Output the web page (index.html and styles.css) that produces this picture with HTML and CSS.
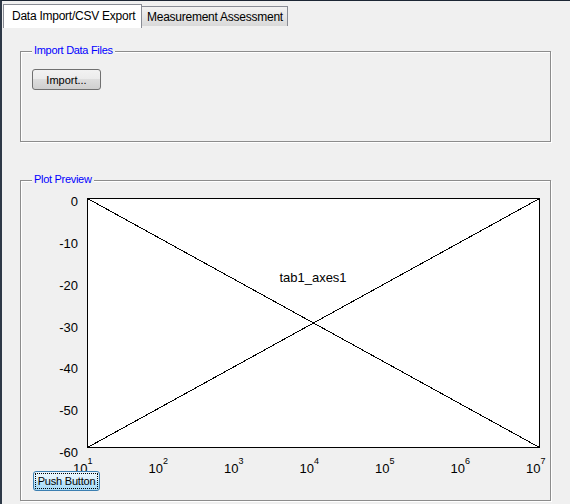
FILE: index.html
```html
<!DOCTYPE html>
<html>
<head>
<meta charset="utf-8">
<link rel="stylesheet" href="styles.css">
</head>
<body>
<div class="tabs">
  <div class="tab tab-active">Data Import/CSV Export</div>
  <div class="tab tab-inactive">Measurement Assessment</div>
</div>
<div class="pane">
  <div class="group group-import">
    <div class="group-title">Import Data Files</div>
    <button class="btn btn-import">Import...</button>
  </div>
  <div class="group group-plot">
    <div class="group-title">Plot Preview</div>
    <svg class="plot" viewBox="21 181 529 318" width="529" height="318">
      <rect x="87.5" y="198.5" width="452" height="249" fill="#fff" stroke="#000" shape-rendering="crispEdges"/>
      <path d="M87.5 198.5 L539.5 447.5 M87.5 447.5 L539.5 198.5" stroke="#000" fill="none" shape-rendering="crispEdges"/>
      <g class="ylabels" text-anchor="end">
        <text x="78" y="206">0</text>
        <text x="78" y="248">-10</text>
        <text x="78" y="290">-20</text>
        <text x="78" y="331.5">-30</text>
        <text x="78" y="373">-40</text>
        <text x="78" y="415">-50</text>
        <text x="78" y="457">-60</text>
      </g>
      <g class="xlabels">
        <text x="87.5" y="473" text-anchor="end">10</text><text class="sup" x="87.5" y="463.5">1</text>
        <text x="163" y="473" text-anchor="end">10</text><text class="sup" x="163" y="463.5">2</text>
        <text x="238.5" y="473" text-anchor="end">10</text><text class="sup" x="238.5" y="463.5">3</text>
        <text x="314" y="473" text-anchor="end">10</text><text class="sup" x="314" y="463.5">4</text>
        <text x="389.5" y="473" text-anchor="end">10</text><text class="sup" x="389.5" y="463.5">5</text>
        <text x="465" y="473" text-anchor="end">10</text><text class="sup" x="465" y="463.5">6</text>
        <text x="540.5" y="473" text-anchor="end">10</text><text class="sup" x="540.5" y="463.5">7</text>
      </g>
      <text class="axes-name" x="313" y="282" text-anchor="middle">tab1_axes1</text>
    </svg>
    <button class="btn btn-push">Push Button</button>
  </div>
</div>
</body>
</html>
```

FILE: styles.css
```css
html {
  margin: 0;
  padding: 0;
}

body {
  margin: 0;
  width: 570px;
  height: 504px;
  box-sizing: border-box;
  overflow: hidden;
  background: #f0f0f0;
  border-top: 1px solid #1c2634;
  border-left: 2px solid #2e3947;
  font-family: "Liberation Sans", Arial, sans-serif;
  color: #000;
}

.tabs {
  display: flex;
  align-items: flex-start;
  height: 27px;
  box-sizing: border-box;
  padding: 3px 0 0 1px;
}

.tab {
  box-sizing: border-box;
  font-size: 12px;
  line-height: 14px;
  letter-spacing: -0.25px;
  white-space: nowrap;
  border: 1px solid #898c95;
  border-bottom: none;
}

.tab-active {
  width: 139px;
  height: 24px;
  padding: 4px 0 0 8px;
  background: #fff;
}

.tab-inactive {
  width: 146px;
  height: 20px;
  margin-top: 2px;
  padding: 3px 0 0 5px;
  border-left: none;
  background: linear-gradient(#f2f2f2, #e6e6e6 50%, #d8d8d8);
}

.pane {
  padding: 23px 0 0 18px;
}

.group {
  width: 531px;
  box-sizing: border-box;
  border: 1px solid #8c8c8c;
  box-shadow: inset 1px 1px 0 #fff, 1px 1px 0 #fff;
}

.group-import {
  height: 91px;
}

.group-plot {
  position: relative;
  height: 321px;
  margin-top: 38px;
}

.group-title {
  width: max-content;
  margin: -8px 0 0 11px;
  padding: 0 2px;
  background: #f0f0f0;
  color: #0000ff;
  font-size: 11px;
  line-height: 13px;
  letter-spacing: -0.3px;
}

.btn {
  display: block;
  box-sizing: border-box;
  padding: 0;
  font-family: "Liberation Sans", Arial, sans-serif;
  font-size: 11px;
  color: #000;
  border: 1px solid #707070;
  border-radius: 3px;
  background: linear-gradient(#f2f2f2 0%, #ebebeb 50%, #dddddd 50%, #cfcfcf 100%);
}

.btn-import {
  width: 69px;
  height: 21px;
  margin: 12px 0 0 11px;
}

.plot {
  display: block;
  margin-top: -5px;
}

.plot text {
  font-family: "Liberation Sans", Arial, sans-serif;
  font-size: 13px;
  fill: #000;
}

.plot text.sup {
  font-size: 9px;
}

.btn-push {
  position: absolute;
  left: 12px;
  top: 290px;
  width: 67px;
  height: 20px;
  letter-spacing: -0.2px;
  border-color: #3c7fb1;
  background: linear-gradient(#eaf6fd 0%, #d9f0fc 50%, #bee6fd 50%, #a7d9f5 100%);
  outline: 1px dotted #000;
  outline-offset: -3px;
}
```
